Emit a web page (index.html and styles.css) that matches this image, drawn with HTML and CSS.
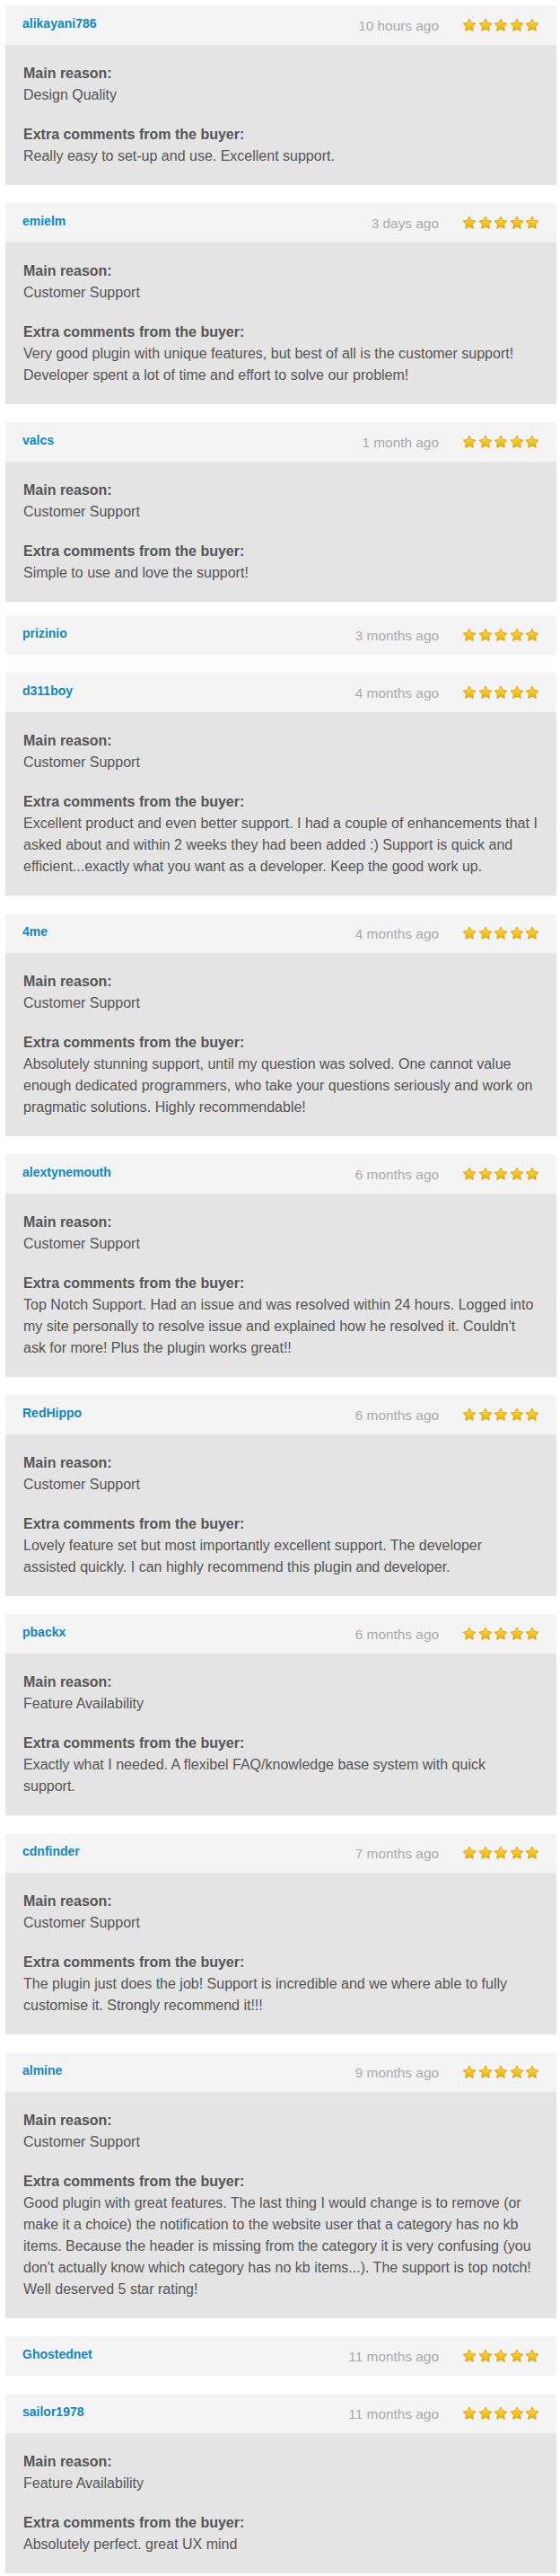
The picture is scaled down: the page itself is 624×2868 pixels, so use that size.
FILE: index.html
```html
<!DOCTYPE html>
<html lang="en">
<head>
<meta charset="utf-8">
<title>Reviews</title>
<link rel="stylesheet" href="styles.css">
</head>
<body>
<svg class="defs" width="0" height="0" aria-hidden="true">
  <defs>
    <linearGradient id="sg" x1="0" y1="0" x2="0" y2="1">
      <stop offset="0" stop-color="#ffe066"/>
      <stop offset="0.55" stop-color="#fcc418"/>
      <stop offset="1" stop-color="#f2a900"/>
    </linearGradient>
    <symbol id="star" viewBox="0 0 16 16">
      <path d="M8 1.1 L10.12 5.49 L14.94 6.14 L11.42 9.51 L12.29 14.31 L8 12 L3.71 14.31 L4.58 9.51 L1.06 6.14 L5.88 5.49 Z" fill="url(#sg)" stroke="#d69a00" stroke-width="0.9" stroke-linejoin="round"/>
    </symbol>
  </defs>
</svg>

<div class="reviews">

  <div class="card">
    <div class="head"><a class="user">alikayani786</a><span class="time">10 hours ago</span><span class="stars"><svg><use href="#star"/></svg><svg><use href="#star"/></svg><svg><use href="#star"/></svg><svg><use href="#star"/></svg><svg><use href="#star"/></svg></span></div>
    <div class="body">
      <div class="sec"><div class="label">Main reason:</div><div class="val">Design Quality</div></div>
      <div class="sec"><div class="label">Extra comments from the buyer:</div><div class="val">Really easy to set-up and use. Excellent support.</div></div>
    </div>
  </div>

  <div class="card">
    <div class="head"><a class="user">emielm</a><span class="time">3 days ago</span><span class="stars"><svg><use href="#star"/></svg><svg><use href="#star"/></svg><svg><use href="#star"/></svg><svg><use href="#star"/></svg><svg><use href="#star"/></svg></span></div>
    <div class="body">
      <div class="sec"><div class="label">Main reason:</div><div class="val">Customer Support</div></div>
      <div class="sec"><div class="label">Extra comments from the buyer:</div><div class="val">Very good plugin with unique features, but best of all is the customer support! Developer spent a lot of time and effort to solve our problem!</div></div>
    </div>
  </div>

  <div class="card">
    <div class="head"><a class="user">valcs</a><span class="time">1 month ago</span><span class="stars"><svg><use href="#star"/></svg><svg><use href="#star"/></svg><svg><use href="#star"/></svg><svg><use href="#star"/></svg><svg><use href="#star"/></svg></span></div>
    <div class="body">
      <div class="sec"><div class="label">Main reason:</div><div class="val">Customer Support</div></div>
      <div class="sec"><div class="label">Extra comments from the buyer:</div><div class="val">Simple to use and love the support!</div></div>
    </div>
  </div>

  <div class="card only-head tight">
    <div class="head"><a class="user">prizinio</a><span class="time">3 months ago</span><span class="stars"><svg><use href="#star"/></svg><svg><use href="#star"/></svg><svg><use href="#star"/></svg><svg><use href="#star"/></svg><svg><use href="#star"/></svg></span></div>
  </div>

  <div class="card">
    <div class="head"><a class="user">d311boy</a><span class="time">4 months ago</span><span class="stars"><svg><use href="#star"/></svg><svg><use href="#star"/></svg><svg><use href="#star"/></svg><svg><use href="#star"/></svg><svg><use href="#star"/></svg></span></div>
    <div class="body">
      <div class="sec"><div class="label">Main reason:</div><div class="val">Customer Support</div></div>
      <div class="sec"><div class="label">Extra comments from the buyer:</div><div class="val">Excellent product and even better support. I had a couple of enhancements that I asked about and within 2 weeks they had been added :) Support is quick and efficient...exactly what you want as a developer. Keep the good work up.</div></div>
    </div>
  </div>

  <div class="card">
    <div class="head"><a class="user">4me</a><span class="time">4 months ago</span><span class="stars"><svg><use href="#star"/></svg><svg><use href="#star"/></svg><svg><use href="#star"/></svg><svg><use href="#star"/></svg><svg><use href="#star"/></svg></span></div>
    <div class="body">
      <div class="sec"><div class="label">Main reason:</div><div class="val">Customer Support</div></div>
      <div class="sec"><div class="label">Extra comments from the buyer:</div><div class="val">Absolutely stunning support, until my question was solved. One cannot value enough dedicated programmers, who take your questions seriously and work on pragmatic solutions. Highly recommendable!</div></div>
    </div>
  </div>

  <div class="card">
    <div class="head"><a class="user">alextynemouth</a><span class="time">6 months ago</span><span class="stars"><svg><use href="#star"/></svg><svg><use href="#star"/></svg><svg><use href="#star"/></svg><svg><use href="#star"/></svg><svg><use href="#star"/></svg></span></div>
    <div class="body">
      <div class="sec"><div class="label">Main reason:</div><div class="val">Customer Support</div></div>
      <div class="sec"><div class="label">Extra comments from the buyer:</div><div class="val">Top Notch Support. Had an issue and was resolved within 24 hours. Logged into my site personally to resolve issue and explained how he resolved it. Couldn't ask for more! Plus the plugin works great!!</div></div>
    </div>
  </div>

  <div class="card">
    <div class="head"><a class="user">RedHippo</a><span class="time">6 months ago</span><span class="stars"><svg><use href="#star"/></svg><svg><use href="#star"/></svg><svg><use href="#star"/></svg><svg><use href="#star"/></svg><svg><use href="#star"/></svg></span></div>
    <div class="body">
      <div class="sec"><div class="label">Main reason:</div><div class="val">Customer Support</div></div>
      <div class="sec"><div class="label">Extra comments from the buyer:</div><div class="val">Lovely feature set but most importantly excellent support. The developer assisted quickly. I can highly recommend this plugin and developer.</div></div>
    </div>
  </div>

  <div class="card">
    <div class="head"><a class="user">pbackx</a><span class="time">6 months ago</span><span class="stars"><svg><use href="#star"/></svg><svg><use href="#star"/></svg><svg><use href="#star"/></svg><svg><use href="#star"/></svg><svg><use href="#star"/></svg></span></div>
    <div class="body">
      <div class="sec"><div class="label">Main reason:</div><div class="val">Feature Availability</div></div>
      <div class="sec"><div class="label">Extra comments from the buyer:</div><div class="val">Exactly what I needed. A flexibel FAQ/knowledge base system with quick support.</div></div>
    </div>
  </div>

  <div class="card">
    <div class="head"><a class="user">cdnfinder</a><span class="time">7 months ago</span><span class="stars"><svg><use href="#star"/></svg><svg><use href="#star"/></svg><svg><use href="#star"/></svg><svg><use href="#star"/></svg><svg><use href="#star"/></svg></span></div>
    <div class="body">
      <div class="sec"><div class="label">Main reason:</div><div class="val">Customer Support</div></div>
      <div class="sec"><div class="label">Extra comments from the buyer:</div><div class="val">The plugin just does the job! Support is incredible and we where able to fully customise it. Strongly recommend it!!!</div></div>
    </div>
  </div>

  <div class="card">
    <div class="head"><a class="user">almine</a><span class="time">9 months ago</span><span class="stars"><svg><use href="#star"/></svg><svg><use href="#star"/></svg><svg><use href="#star"/></svg><svg><use href="#star"/></svg><svg><use href="#star"/></svg></span></div>
    <div class="body">
      <div class="sec"><div class="label">Main reason:</div><div class="val">Customer Support</div></div>
      <div class="sec"><div class="label">Extra comments from the buyer:</div><div class="val">Good plugin with great features. The last thing I would change is to remove (or make it a choice) the notification to the website user that a category has no kb items. Because the header is missing from the category it is very confusing (you don't actually know which category has no kb items...). The support is top notch! Well deserved 5 star rating!</div></div>
    </div>
  </div>

  <div class="card only-head">
    <div class="head"><a class="user">Ghostednet</a><span class="time">11 months ago</span><span class="stars"><svg><use href="#star"/></svg><svg><use href="#star"/></svg><svg><use href="#star"/></svg><svg><use href="#star"/></svg><svg><use href="#star"/></svg></span></div>
  </div>

  <div class="card">
    <div class="head"><a class="user">sailor1978</a><span class="time">11 months ago</span><span class="stars"><svg><use href="#star"/></svg><svg><use href="#star"/></svg><svg><use href="#star"/></svg><svg><use href="#star"/></svg><svg><use href="#star"/></svg></span></div>
    <div class="body">
      <div class="sec"><div class="label">Main reason:</div><div class="val">Feature Availability</div></div>
      <div class="sec"><div class="label">Extra comments from the buyer:</div><div class="val">Absolutely perfect. great UX mind</div></div>
    </div>
  </div>

</div>
</body>
</html>
```

FILE: styles.css
```css
html, body {
  margin: 0;
  padding: 0;
  background: #ffffff;
}

body {
  font-family: "Liberation Sans", Arial, sans-serif;
  color: #555555;
}

.defs {
  position: absolute;
  width: 0;
  height: 0;
  overflow: hidden;
}

.reviews {
  display: flex;
  flex-direction: column;
  gap: 20px;
  padding: 6px 4px 0 6px;
}

.card.tight {
  margin-top: -5px;
}

.head {
  display: flex;
  align-items: center;
  height: 44px;
  box-sizing: border-box;
  padding: 0 19px 0 19px;
  background: #f4f4f4;
  border-radius: 4px 4px 0 0;
}

.only-head .head {
  border-radius: 4px;
}

.user {
  font-size: 14px;
  font-weight: bold;
  color: #0e88c2;
  text-decoration: none;
  margin-right: auto;
  padding-bottom: 4px;
}

.time {
  font-size: 15.4px;
  color: #aaaaaa;
  margin-right: 26px;
  padding-top: 1px;
}

.stars {
  display: flex;
  gap: 1.5px;
}

.stars svg {
  width: 16px;
  height: 16px;
  display: block;
}

.body {
  background: #e4e4e4;
  padding: 20px;
  display: flex;
  flex-direction: column;
  gap: 20px;
  font-size: 16px;
  line-height: 24px;
}

.label {
  font-weight: bold;
}
```
